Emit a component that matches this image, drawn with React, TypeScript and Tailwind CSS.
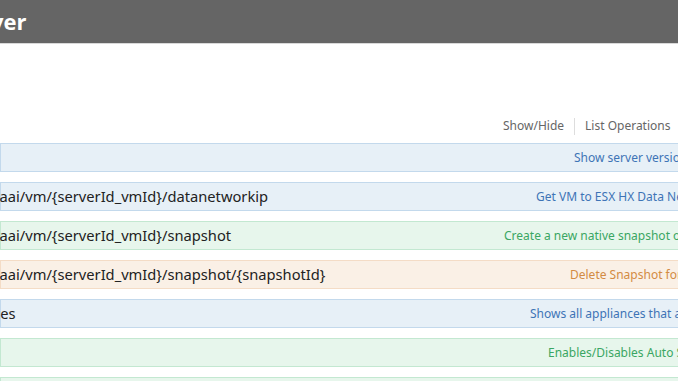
const ops = [
  {
    path: "/version",
    pathClass: "-ml-[120px]",
    descWidth: "w-[573px]",
    desc: "Show server version information",
    tone: "get",
  },
  {
    path: "vaai/vm/{serverId_vmId}/datanetworkip",
    pathClass: "-ml-[9px]",
    descWidth: "w-[535px]",
    desc: "Get VM to ESX HX Data Network IP",
    tone: "get",
  },
  {
    path: "vaai/vm/{serverId_vmId}/snapshot",
    pathClass: "-ml-[9px]",
    descWidth: "w-[503px]",
    desc: "Create a new native snapshot of a VM",
    tone: "post",
  },
  {
    path: "vaai/vm/{serverId_vmId}/snapshot/{snapshotId}",
    pathClass: "-ml-[9px]",
    descWidth: "w-[569px]",
    desc: "Delete Snapshot for a VM",
    tone: "delete",
  },
  {
    path: "appliances",
    pathClass: "-ml-[59px]",
    descWidth: "w-[529px]",
    desc: "Shows all appliances that are registered",
    tone: "get",
  },
  {
    path: "/autosupport",
    pathClass: "-ml-[140px]",
    descWidth: "w-[547px]",
    desc: "Enables/Disables Auto Support",
    tone: "post",
  },
  {
    path: "/autosupport/test",
    pathClass: "-ml-[200px]",
    descWidth: "w-[520px]",
    desc: "Sends a test Auto Support message",
    tone: "post",
  },
];

const tones: Record<string, { row: string; desc: string }> = {
  get: { row: "bg-[#e7f0f7] border-[#c3d9ec]", desc: "text-[#3e74b6]" },
  post: { row: "bg-[#e7f6ec] border-[#c3e8d1]", desc: "text-[#3aa663]" },
  delete: { row: "bg-[#faf0e6] border-[#f4dcc6]", desc: "text-[#d38b43]" },
};

export default function App() {
  return (
    <div className="w-[678px] h-[381px] overflow-hidden bg-white font-['Noto_Sans',sans-serif]">
      <header className="h-[44px] bg-[#656565] border-b border-[#d8d8d8] flex items-center whitespace-nowrap">
        <span className="-ml-[44px] -mt-[1px] text-[22px] font-bold text-white font-['Open_Sans',sans-serif] leading-none">
          Server
        </span>
      </header>

      <div className="mt-[73px] h-[18px] flex items-center pl-[503px] whitespace-nowrap text-[12px] text-[#666]">
        <span className="pr-[10px]">Show/Hide</span>
        <span className="h-[17px] border-l border-[#dddddd]" />
        <span className="px-[10px]">List Operations</span>
        <span className="h-[17px] border-l border-[#dddddd]" />
        <span className="px-[10px]">Expand Operations</span>
      </div>

      <ul className="mt-[8px] flex flex-col gap-[10px]">
        {ops.map((op) => {
          const t = tones[op.tone];
          return (
            <li
              key={op.path}
              className={`w-[900px] h-[29px] border flex items-center whitespace-nowrap ${t.row}`}
            >
              <div className={`${op.descWidth} shrink-0 flex items-center`}>
                <span className={`${op.pathClass} text-[14.7px] text-[#222]`}>{op.path}</span>
              </div>
              <span className={`text-[12px] ${t.desc}`}>{op.desc}</span>
            </li>
          );
        })}
      </ul>
    </div>
  );
}
